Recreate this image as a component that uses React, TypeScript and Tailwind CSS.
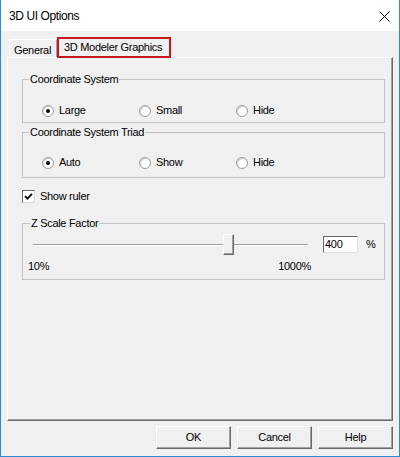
import React from "react";

function Radio({ checked, label }: { checked?: boolean; label: string }) {
  return (
    <div className="flex items-center h-[13px] w-[97px] shrink-0">
      <span className="w-[12px] h-[12px] rounded-full border border-[#9c9c9c] bg-white flex items-center justify-center shadow-[inset_1px_1px_1px_#d0d0d0]">
        {checked && <span className="w-[4px] h-[4px] rounded-full bg-black" />}
      </span>
      <span className="ml-[5px] leading-[13px]">{label}</span>
    </div>
  );
}

function Btn({ label }: { label: string }) {
  return (
    <button className="w-[75px] h-[23px] bg-[#f0f0f0] border border-t-white border-l-white border-r-[#696969] border-b-[#696969] shadow-[inset_-1px_-1px_0_#a0a0a0] flex items-center justify-center leading-[13px]">
      {label}
    </button>
  );
}

export default function App() {
  return (
    <div className="w-[400px] h-[457px] flex flex-col border-l border-r border-b border-[#2a8ad4] bg-[#f0f0f0] text-[11px] tracking-[-0.3px] text-black font-['Liberation_Sans',Arial,sans-serif]">
      {/* title bar */}
      <div className="h-[31px] shrink-0 bg-white flex items-center justify-between pl-[8px] pr-[9px]">
        <span className="text-[12px] tracking-[-0.4px]">3D UI Options</span>
        <svg width="11" height="11" viewBox="0 0 11 11" className="mt-[1px]">
          <path d="M0.5 0.5 L10.5 10.5 M10.5 0.5 L0.5 10.5" stroke="#000" strokeWidth="1" />
        </svg>
      </div>

      {/* body */}
      <div className="flex-1 pt-[6px] pl-[6px]">
        {/* tabs */}
        <div className="h-[20px] flex items-end pl-[2px]">
          <div className="w-[48px] h-[18px] border-t border-l border-white border-r border-r-[#a0a0a0] pl-[4px] pt-[4px] leading-[13px]">
            General
          </div>
          <div className="relative z-10 -mb-[1px] w-[114px] h-[21px] border-2 border-[#c8161d] bg-[#f0f0f0] pl-[5px] pt-[2px] leading-[13px]">
            3D Modeler Graphics
          </div>
        </div>

        {/* panel */}
        <div className="w-[386px] h-[364px] border-t border-l border-white border-r border-b border-r-[#696969] border-b-[#696969] shadow-[inset_-1px_-1px_0_#a0a0a0] pt-[15px] pl-[14px]">
          <fieldset className="w-[363px] h-[50px] border border-[#c2c2c2]">
            <legend className="ml-[6px] px-[1px] leading-[12px]">Coordinate System</legend>
            <div className="flex mt-[19px] pl-[19px]">
              <Radio checked label="Large" />
              <Radio label="Small" />
              <Radio label="Hide" />
            </div>
          </fieldset>

          <fieldset className="w-[363px] h-[52px] mt-[3px] border border-[#c2c2c2]">
            <legend className="ml-[6px] px-[1px] leading-[12px]">Coordinate System Triad</legend>
            <div className="flex mt-[18px] pl-[19px]">
              <Radio checked label="Auto" />
              <Radio label="Show" />
              <Radio label="Hide" />
            </div>
          </fieldset>

          <div className="flex items-center h-[13px] mt-[12px]">
            <span className="w-[13px] h-[13px] bg-white border border-t-[#696969] border-l-[#696969] border-r-[#d8d8d8] border-b-[#d8d8d8] flex items-center justify-center">
              <svg width="9" height="9" viewBox="0 0 9 9">
                <path d="M1 4.2 L3.4 6.6 L8 1.8" stroke="#000" strokeWidth="1.8" fill="none" />
              </svg>
            </span>
            <span className="ml-[5px] leading-[13px]">Show ruler</span>
          </div>

          <fieldset className="w-[363px] h-[63px] mt-[14px] border border-[#c2c2c2]">
            <legend className="ml-[7px] px-[1px] leading-[12px]">Z Scale Factor</legend>
            <div className="flex items-center h-[21px] mt-[5px] pl-[10px]">
              <div className="relative w-[275px] h-[21px] flex items-center">
                <div className="w-full h-[1px] bg-[#a0a0a0] shadow-[0_1px_0_#ffffff]" />
                <div className="absolute left-[190px] top-0 w-[11px] h-[21px] bg-[#f0f0f0] border border-t-white border-l-white border-r-[#696969] border-b-[#696969] shadow-[inset_-1px_-1px_0_#a0a0a0]" />
              </div>
              <div className="ml-[15px] w-[35px] h-[17px] bg-white border border-t-[#696969] border-l-[#696969] border-r-[#e3e3e3] border-b-[#e3e3e3] pl-[1px] flex items-center leading-[13px]">
                400
              </div>
              <span className="ml-[8px] leading-[13px]">%</span>
            </div>
            <div className="flex justify-between w-[288px] pl-[5px] mt-[5px] leading-[13px]">
              <span>10%</span>
              <span>1000%</span>
            </div>
          </fieldset>
        </div>

        {/* buttons */}
        <div className="w-[386px] flex justify-end gap-[6px] mt-[5px]">
          <Btn label="OK" />
          <Btn label="Cancel" />
          <Btn label="Help" />
        </div>
      </div>
    </div>
  );
}
